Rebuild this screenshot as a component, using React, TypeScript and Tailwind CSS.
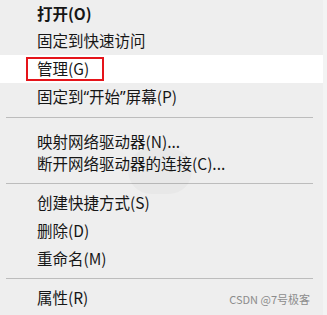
import React from "react";

const font = { fontFamily: '"Noto Sans CJK SC", "Noto Sans", sans-serif' };

function Row({ h, children, bold, white }: { h: string; children: React.ReactNode; bold?: boolean; white?: boolean }) {
  return (
    <div className={`${h} flex items-center pl-[37px] ${white ? "bg-white" : ""}`}>
      <span className={`text-[15.5px] leading-none text-[#161616] ${bold ? "font-bold" : ""}`}>{children}</span>
    </div>
  );
}

function Sep({ h, mt }: { h: string; mt: string }) {
  return (
    <div className={h}>
      <div className={`${mt} ml-[6px] w-[307px] h-px bg-[#bcbcbc]`} />
    </div>
  );
}

export default function App() {
  return (
    <div className="w-[327px] h-[315px] bg-[#f3f3f3] flex overflow-hidden" style={font}>
      <div className="relative w-[323px] h-[315px] bg-[#eeeeee] flex flex-col">
        <div className="absolute left-[128px] top-[148px] w-[64px] h-[46px] rounded-full bg-black/[0.025]" />
        <Row h="h-[27px]" bold>打开(O)</Row>
        <Row h="h-[28px]">固定到快速访问</Row>
        <div className="relative">
          <Row h="h-[28px]" white>管理(G)</Row>
          <div className="absolute left-[26px] top-[2px] w-[78px] h-[24px] border-2 border-[#e5141a]" />
        </div>
        <Row h="h-[28px]">
          固定到<span className="font-['Noto_Sans',sans-serif]">“</span>开始<span className="font-['Noto_Sans',sans-serif]">”</span>屏幕(P)
        </Row>
        <Sep h="h-[20px]" mt="mt-[6px]" />
        <Row h="h-[22px]">映射网络驱动器(N)...</Row>
        <Row h="h-[22px]">断开网络驱动器的连接(C)...</Row>
        <Sep h="h-[14px]" mt="mt-[8px]" />
        <Row h="h-[28px]">创建快捷方式(S)</Row>
        <Row h="h-[28px]">删除(D)</Row>
        <Row h="h-[28px]">重命名(M)</Row>
        <Sep h="h-[11px]" mt="mt-[5px]" />
        <div className="h-[28px] flex items-center pl-[37px] pr-[13px]">
          <span className="text-[15.5px] leading-none text-[#161616]">属性(R)</span>
          <span className="ml-auto text-[11px] leading-none text-[#8c8c8c] mt-[3px]">CSDN @7号极客</span>
        </div>
      </div>
    </div>
  );
}
